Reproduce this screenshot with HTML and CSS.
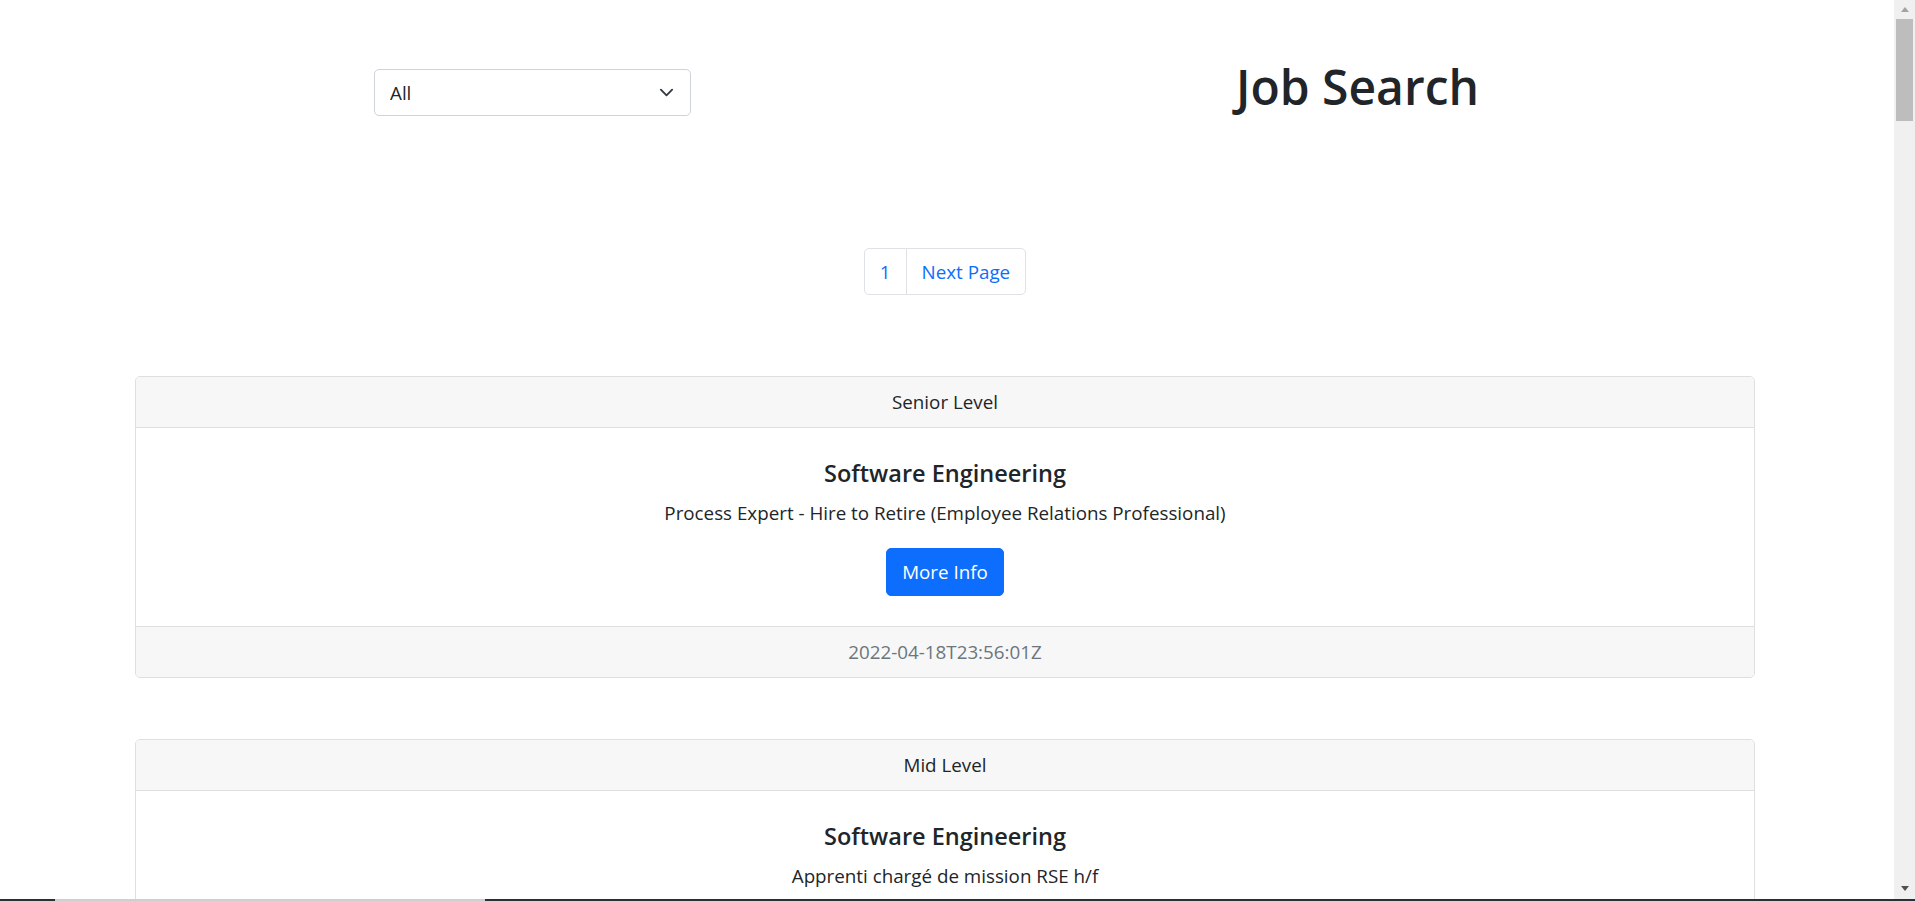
FILE: index.html
```html
<!DOCTYPE html>
<html lang="en">
<head>
<meta charset="utf-8">
<title>Job Search</title>
<link rel="stylesheet" href="styles.css">
</head>
<body>
<header class="top-row">
  <div class="col">
    <div class="select-wrap">
      <select class="form-select">
        <option>All</option>
        <option>Entry Level</option>
        <option>Mid Level</option>
        <option>Senior Level</option>
        <option>Internship</option>
      </select>
      <svg class="chevron" width="15" height="15" viewBox="0 0 16 16" aria-hidden="true"><path d="M2 5l6 6 6-6" fill="none" stroke="#343a40" stroke-width="2" stroke-linecap="round" stroke-linejoin="round"/></svg>
    </div>
  </div>
  <div class="col">
    <h1 class="title">Job Search</h1>
  </div>
</header>

<nav class="pager-wrap">
  <ul class="pager">
    <li><a class="page-link first" href="#">1</a></li>
    <li><a class="page-link last" href="#">Next Page</a></li>
  </ul>
</nav>

<main class="cards">
  <section class="card">
    <div class="card-header">Senior Level</div>
    <div class="card-body">
      <h5 class="card-title">Software Engineering</h5>
      <p class="card-text">Process Expert - Hire to Retire (Employee Relations Professional)</p>
      <div class="actions"><a class="btn" href="#">More Info</a></div>
    </div>
    <div class="card-footer">2022-04-18T23:56:01Z</div>
  </section>
  <section class="card">
    <div class="card-header">Mid Level</div>
    <div class="card-body">
      <h5 class="card-title">Software Engineering</h5>
      <p class="card-text">Apprenti chargé de mission RSE h/f</p>
      <div class="actions"><a class="btn" href="#">More Info</a></div>
    </div>
    <div class="card-footer">2022-04-18T23:41:12Z</div>
  </section>
  <section class="card">
    <div class="card-header">Entry Level</div>
    <div class="card-body">
      <h5 class="card-title">Software Engineering</h5>
      <p class="card-text">Junior Backend Developer (Java / Spring)</p>
      <div class="actions"><a class="btn" href="#">More Info</a></div>
    </div>
    <div class="card-footer">2022-04-18T23:30:45Z</div>
  </section>
  <section class="card">
    <div class="card-header">Senior Level</div>
    <div class="card-body">
      <h5 class="card-title">Data Science</h5>
      <p class="card-text">Lead Data Scientist - Customer Analytics</p>
      <div class="actions"><a class="btn" href="#">More Info</a></div>
    </div>
    <div class="card-footer">2022-04-18T23:12:09Z</div>
  </section>
  <section class="card">
    <div class="card-header">Mid Level</div>
    <div class="card-body">
      <h5 class="card-title">Software Engineering</h5>
      <p class="card-text">Frontend Engineer (React)</p>
      <div class="actions"><a class="btn" href="#">More Info</a></div>
    </div>
    <div class="card-footer">2022-04-18T22:58:33Z</div>
  </section>
  <section class="card">
    <div class="card-header">Internship</div>
    <div class="card-body">
      <h5 class="card-title">Software Engineering</h5>
      <p class="card-text">Stagiaire Développeur Full Stack</p>
      <div class="actions"><a class="btn" href="#">More Info</a></div>
    </div>
    <div class="card-footer">2022-04-18T22:40:17Z</div>
  </section>
  <section class="card">
    <div class="card-header">Senior Level</div>
    <div class="card-body">
      <h5 class="card-title">Software Engineering</h5>
      <p class="card-text">Senior DevOps Engineer</p>
      <div class="actions"><a class="btn" href="#">More Info</a></div>
    </div>
    <div class="card-footer">2022-04-18T22:21:50Z</div>
  </section>
  <section class="card">
    <div class="card-header">Mid Level</div>
    <div class="card-body">
      <h5 class="card-title">Software Engineering</h5>
      <p class="card-text">QA Automation Engineer</p>
      <div class="actions"><a class="btn" href="#">More Info</a></div>
    </div>
    <div class="card-footer">2022-04-18T22:05:02Z</div>
  </section>
  <section class="card">
    <div class="card-header">Entry Level</div>
    <div class="card-body">
      <h5 class="card-title">Data Science</h5>
      <p class="card-text">Data Analyst - Business Intelligence</p>
      <div class="actions"><a class="btn" href="#">More Info</a></div>
    </div>
    <div class="card-footer">2022-04-18T21:47:38Z</div>
  </section>
  <section class="card">
    <div class="card-header">Senior Level</div>
    <div class="card-body">
      <h5 class="card-title">Software Engineering</h5>
      <p class="card-text">Staff Software Engineer - Platform</p>
      <div class="actions"><a class="btn" href="#">More Info</a></div>
    </div>
    <div class="card-footer">2022-04-18T21:30:14Z</div>
  </section>
  <section class="card">
    <div class="card-header">Mid Level</div>
    <div class="card-body">
      <h5 class="card-title">Software Engineering</h5>
      <p class="card-text">Mobile Developer (iOS / Android)</p>
      <div class="actions"><a class="btn" href="#">More Info</a></div>
    </div>
    <div class="card-footer">2022-04-18T21:12:46Z</div>
  </section>
  <section class="card">
    <div class="card-header">Entry Level</div>
    <div class="card-body">
      <h5 class="card-title">Software Engineering</h5>
      <p class="card-text">Graduate Software Developer</p>
      <div class="actions"><a class="btn" href="#">More Info</a></div>
    </div>
    <div class="card-footer">2022-04-18T20:55:21Z</div>
  </section>
  <section class="card">
    <div class="card-header">Senior Level</div>
    <div class="card-body">
      <h5 class="card-title">Software Engineering</h5>
      <p class="card-text">Cloud Solutions Architect</p>
      <div class="actions"><a class="btn" href="#">More Info</a></div>
    </div>
    <div class="card-footer">2022-04-18T20:38:59Z</div>
  </section>
  <section class="card">
    <div class="card-header">Mid Level</div>
    <div class="card-body">
      <h5 class="card-title">Data Science</h5>
      <p class="card-text">Machine Learning Engineer</p>
      <div class="actions"><a class="btn" href="#">More Info</a></div>
    </div>
    <div class="card-footer">2022-04-18T20:20:34Z</div>
  </section>
  <section class="card">
    <div class="card-header">Internship</div>
    <div class="card-body">
      <h5 class="card-title">Software Engineering</h5>
      <p class="card-text">Software Engineering Intern</p>
      <div class="actions"><a class="btn" href="#">More Info</a></div>
    </div>
    <div class="card-footer">2022-04-18T20:03:08Z</div>
  </section>
  <section class="card">
    <div class="card-header">Senior Level</div>
    <div class="card-body">
      <h5 class="card-title">Software Engineering</h5>
      <p class="card-text">Engineering Manager - Payments</p>
      <div class="actions"><a class="btn" href="#">More Info</a></div>
    </div>
    <div class="card-footer">2022-04-18T19:45:43Z</div>
  </section>
  <section class="card">
    <div class="card-header">Mid Level</div>
    <div class="card-body">
      <h5 class="card-title">Software Engineering</h5>
      <p class="card-text">Site Reliability Engineer</p>
      <div class="actions"><a class="btn" href="#">More Info</a></div>
    </div>
    <div class="card-footer">2022-04-18T19:28:17Z</div>
  </section>
  <section class="card">
    <div class="card-header">Entry Level</div>
    <div class="card-body">
      <h5 class="card-title">Software Engineering</h5>
      <p class="card-text">Technicien Support Informatique</p>
      <div class="actions"><a class="btn" href="#">More Info</a></div>
    </div>
    <div class="card-footer">2022-04-18T19:10:52Z</div>
  </section>
  <section class="card">
    <div class="card-header">Senior Level</div>
    <div class="card-body">
      <h5 class="card-title">Data Science</h5>
      <p class="card-text">Principal Data Engineer</p>
      <div class="actions"><a class="btn" href="#">More Info</a></div>
    </div>
    <div class="card-footer">2022-04-18T18:53:26Z</div>
  </section>
  <section class="card">
    <div class="card-header">Mid Level</div>
    <div class="card-body">
      <h5 class="card-title">Software Engineering</h5>
      <p class="card-text">Security Engineer - Application Security</p>
      <div class="actions"><a class="btn" href="#">More Info</a></div>
    </div>
    <div class="card-footer">2022-04-18T18:36:01Z</div>
  </section>
</main>

<div class="scrollbar" aria-hidden="true">
  <div class="sb-button"><span class="sb-arrow-up"></span></div>
  <div class="sb-thumb"></div>
  <div class="sb-fill"></div>
  <div class="sb-button"><span class="sb-arrow-down"></span></div>
</div>
<div class="screen-edge" aria-hidden="true"></div>
</body>
</html>
```

FILE: styles.css
```css
html {
  scrollbar-width: none;
}

html, body {
  margin: 0;
  padding: 0;
}

body {
  font-family: "Open Sans", "Noto Sans", sans-serif;
  font-size: 18.8px;
  line-height: 30px;
  color: #212529;
  background: #ffffff;
}

/* top row */
.top-row {
  display: flex;
  width: 1650px;
  margin-left: 120px;
  padding-top: 57px;
}

.col {
  flex: 1 1 0;
  display: flex;
  justify-content: center;
  align-items: flex-start;
}

.select-wrap {
  position: relative;
  width: 317px;
  margin-top: 12px;
}

.form-select {
  display: block;
  width: 100%;
  height: 47px;
  box-sizing: border-box;
  margin: 0;
  padding: 7.5px 45px 7.5px 15px;
  font-family: inherit;
  font-size: 18.8px;
  line-height: 30px;
  color: #212529;
  background: #ffffff;
  border: 1px solid #ced4da;
  border-radius: 5px;
  -webkit-appearance: none;
  appearance: none;
  outline: none;
}

.chevron {
  position: absolute;
  right: 17px;
  top: 16px;
  pointer-events: none;
}

.title {
  margin: 0;
  font-size: 48px;
  line-height: 60px;
  font-weight: 600;
  color: #212529;
}

/* pagination */
.pager-wrap {
  width: 1620px;
  margin-left: 135px;
}

.pager {
  display: flex;
  justify-content: center;
  list-style: none;
  margin: 131px 0 20px;
  padding: 0;
}

.page-link {
  display: block;
  padding: 7.5px 15px;
  line-height: 30px;
  color: #0d6efd;
  text-decoration: none;
  background: #ffffff;
  border: 1px solid #dee2e6;
}

.page-link.first {
  border-radius: 5px 0 0 5px;
}

.page-link.last {
  margin-left: -1px;
  border-radius: 0 5px 5px 0;
}

/* cards */
.cards {
  display: flow-root;
  width: 1620px;
  margin-left: 135px;
  padding-bottom: 60px;
}

.card {
  margin-top: 61px;
  border: 1px solid #dfdfdf;
  border-radius: 5px;
  overflow: hidden;
  text-align: center;
  background: #ffffff;
}

.card-header {
  padding: 10px 20px;
  background: #f7f7f7;
  border-bottom: 1px solid #dfdfdf;
  color: #212529;
}

.card-body {
  padding: 30px;
}

.card-title {
  margin: 0 0 10px;
  font-size: 23.5px;
  line-height: 30px;
  font-weight: 600;
}

.card-text {
  margin: 0 0 20px;
}

.actions {
  display: flex;
  justify-content: center;
}

.btn {
  display: block;
  padding: 8px 15px;
  line-height: 30px;
  color: #ffffff;
  background: #0d6efd;
  border: 1px solid #0d6efd;
  border-radius: 5px;
  text-decoration: none;
}

.card-footer {
  padding: 10px 20px;
  background: #f7f7f7;
  border-top: 1px solid #dfdfdf;
  color: #6c757d;
}

/* window chrome drawn over the page */
.scrollbar {
  position: fixed;
  top: 0;
  right: 0;
  bottom: 0;
  width: 21px;
  display: flex;
  flex-direction: column;
  background: #f0f0f0;
}

.sb-button {
  height: 21px;
  display: flex;
  justify-content: center;
  align-items: center;
  flex: none;
}

.sb-arrow-up {
  width: 0;
  height: 0;
  margin-top: -2px;
  border-left: 4.5px solid transparent;
  border-right: 4.5px solid transparent;
  border-bottom: 5px solid #a3a3a3;
}

.sb-arrow-down {
  width: 0;
  height: 0;
  margin-top: -4px;
  border-left: 4.5px solid transparent;
  border-right: 4.5px solid transparent;
  border-top: 5px solid #505050;
}

.sb-thumb {
  flex: none;
  height: 102px;
  margin: -2px 2px 0;
  background: #bdbdbd;
}

.sb-fill {
  flex: 1 1 auto;
}

.screen-edge {
  position: fixed;
  left: 0;
  right: 0;
  bottom: 0;
  height: 2px;
  background: linear-gradient(to right, #263238 0, #263238 55px, #cfcfcf 55px, #cfcfcf 485px, #263238 485px);
}
```
